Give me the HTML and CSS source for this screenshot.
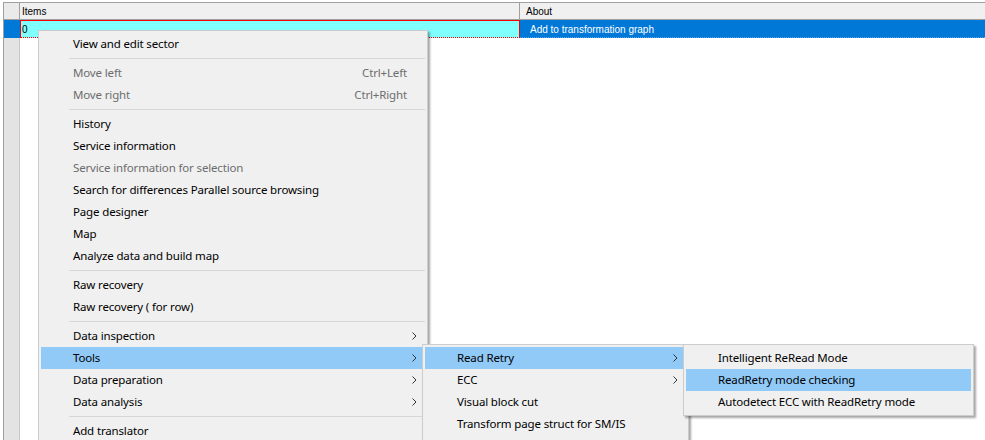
FILE: index.html
```html
<!DOCTYPE html>
<html>
<head>
<meta charset="utf-8">
<link rel="stylesheet" href="styles.css">
</head>
<body>
<div class="table">
  <div class="hdr">
    <div class="gut hgut"></div>
    <div class="hcell items">Items</div>
    <div class="hcell about">About</div>
  </div>
  <div class="row">
    <div class="gut sel"></div>
    <div class="cell items cur">0</div>
    <div class="cell about selc">Add to transformation graph</div>
  </div>
  <div class="rest">
    <div class="gut"></div>
    <div class="blank"></div>
  </div>
</div>

<div class="menu main">
  <div class="mi">View and edit sector</div>
  <div class="sep"></div>
  <div class="mi dis"><span class="lbl">Move left</span><span class="sc">Ctrl+Left</span></div>
  <div class="mi dis"><span class="lbl">Move right</span><span class="sc">Ctrl+Right</span></div>
  <div class="sep"></div>
  <div class="mi">History</div>
  <div class="mi">Service information</div>
  <div class="mi dis">Service information for selection</div>
  <div class="mi">Search for differences Parallel source browsing</div>
  <div class="mi">Page designer</div>
  <div class="mi">Map</div>
  <div class="mi">Analyze data and build map</div>
  <div class="sep"></div>
  <div class="mi">Raw recovery</div>
  <div class="mi">Raw recovery ( for row)</div>
  <div class="sep"></div>
  <div class="mi sub"><span class="lbl">Data inspection</span><svg class="arr" width="5" height="8" viewBox="0 0 5 8"><polyline points="0.5,0.5 4,4 0.5,7.5"/></svg></div>
  <div class="mi sub hi"><span class="lbl">Tools</span><svg class="arr" width="5" height="8" viewBox="0 0 5 8"><polyline points="0.5,0.5 4,4 0.5,7.5"/></svg></div>
  <div class="mi sub"><span class="lbl">Data preparation</span><svg class="arr" width="5" height="8" viewBox="0 0 5 8"><polyline points="0.5,0.5 4,4 0.5,7.5"/></svg></div>
  <div class="mi sub"><span class="lbl">Data analysis</span><svg class="arr" width="5" height="8" viewBox="0 0 5 8"><polyline points="0.5,0.5 4,4 0.5,7.5"/></svg></div>
  <div class="sep"></div>
  <div class="mi">Add translator</div>
</div>

<div class="menu sub1">
  <div class="mi sub hi"><span class="lbl">Read Retry</span><svg class="arr" width="5" height="8" viewBox="0 0 5 8"><polyline points="0.5,0.5 4,4 0.5,7.5"/></svg></div>
  <div class="mi sub"><span class="lbl">ECC</span><svg class="arr" width="5" height="8" viewBox="0 0 5 8"><polyline points="0.5,0.5 4,4 0.5,7.5"/></svg></div>
  <div class="mi">Visual block cut</div>
  <div class="mi">Transform page struct for SM/IS</div>
</div>

<div class="menu sub2">
  <div class="mi">Intelligent ReRead Mode</div>
  <div class="mi hi">ReadRetry mode checking</div>
  <div class="mi">Autodetect ECC with ReadRetry mode</div>
</div>
</body>
</html>
```

FILE: styles.css
```css
html, body {
  margin: 0;
  padding: 0;
  width: 985px;
  height: 440px;
  overflow: hidden;
  background: #ffffff;
  font-family: "Noto Sans", "Open Sans", sans-serif;
}

.table {
  margin: 2px 0 0 3px;
  height: 438px;
  border-top: 1px solid #a0a0a0;
  border-left: 1px solid #a0a0a0;
  display: flex;
  flex-direction: column;
  font-family: "Liberation Sans", Arial, sans-serif;
  font-size: 10px;
}

.hdr {
  display: flex;
  height: 16px;
  background: #f0f0f0;
  border-bottom: 1px solid #a0a0a0;
}

.gut {
  width: 15px;
  flex: none;
  background: #e3e3e3;
  border-right: 1px solid #c8c8c8;
}

.hgut {
  background: #eaeaea;
  border-right: 1px solid #a0a0a0;
}

.hcell {
  line-height: 17px;
  color: #000;
}

.hcell.items {
  width: 497px;
  padding-left: 2px;
  border-right: 1px solid #a0a0a0;
}

.hcell.about {
  padding-left: 6px;
  flex: 1;
}

.row {
  display: flex;
  height: 18px;
}

.sel {
  background: #0078d7;
  border-right-color: #0078d7;
}

.cell {
  line-height: 17px;
  box-sizing: border-box;
}

.cell.cur {
  width: 500px;
  background: #80ffff;
  border: 1px solid #ff0000;
  border-bottom: 1px dotted #ff0000;
  padding-left: 1px;
  color: #000;
}

.cell.selc {
  flex: 1;
  background: #0078d7;
  color: #ffffff;
  padding-left: 10px;
  line-height: 19px;
  border-bottom: 1px dotted #5aa6e6;
}

.rest {
  flex: 1;
  display: flex;
}

.blank {
  flex: 1;
}

/* menus */
.menu {
  position: absolute;
  box-sizing: border-box;
  background: #f0f0f0;
  border: 1px solid #cccccc;
  padding: 2px;
  box-shadow: 2px 2px 2px rgba(0, 0, 0, 0.35);
  font-family: "Noto Sans", sans-serif;
  font-size: 11.5px;
  letter-spacing: -0.15px;
  color: #000;
}

.main {
  left: 38px;
  top: 30px;
  width: 390px;
  height: 420px;
}

.sub1 {
  left: 422px;
  top: 344px;
  width: 267px;
  height: 100px;
}

.sub2 {
  left: 683px;
  top: 344px;
  width: 291px;
}

.mi {
  height: 22px;
  line-height: 22px;
  padding-left: 32px;
  padding-right: 18px;
  display: flex;
  align-items: center;
  white-space: nowrap;
  position: relative;
}

.mi .lbl {
  flex: 1;
}

.mi .sc {
  text-align: right;
}

.mi.dis {
  color: #6d6d6d;
}

.mi.hi {
  background: #91c9f7;
}

.arr {
  position: absolute;
  right: 8px;
  top: 7px;
}

.arr polyline {
  fill: none;
  stroke: #333333;
  stroke-width: 1;
}

.sep {
  height: 7px;
  position: relative;
}

.sep::after {
  content: "";
  position: absolute;
  left: 28px;
  right: 0;
  top: 3px;
  height: 1px;
  background: #d7d7d7;
}
```
